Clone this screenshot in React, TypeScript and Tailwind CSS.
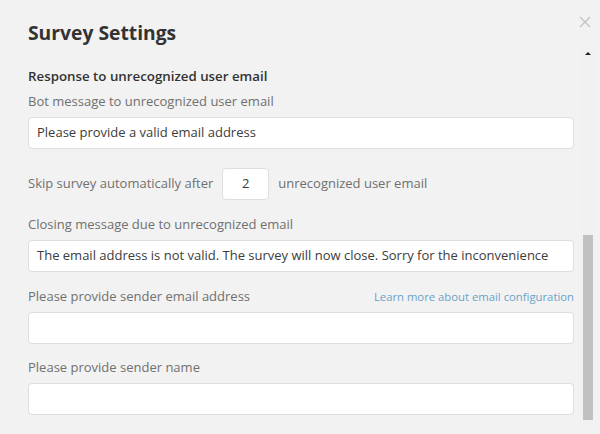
const font = { fontFamily: '"Open Sans", "Liberation Sans", sans-serif' };

function Field({
  label,
  value,
  link,
}: {
  label: string;
  value?: string;
  link?: string;
}) {
  return (
    <div>
      <div className="flex items-baseline justify-between h-5 mb-[6px]">
        <span className="text-[13px] leading-5 text-[#707070]">{label}</span>
        {link && <a className="text-[11.3px] leading-5 text-[#6aa3c8]">{link}</a>}
      </div>
      <div className="h-[32px] bg-white border border-[#dedede] rounded-[4px] px-[8px] flex items-center text-[13px] text-[#3c3c3c] whitespace-nowrap">
        {value}
      </div>
    </div>
  );
}

export default function App() {
  return (
    <div
      className="relative w-[600px] h-[434px] bg-[#f2f2f2] overflow-hidden flex"
      style={font}
    >
      <div className="w-[546px] ml-[28px] flex flex-col">
        <h1 className="mt-[19px] text-[19.3px] leading-7 font-bold text-[#333]">Survey Settings</h1>
        <h2 className="mt-[19px] text-[13.3px] leading-5 font-semibold text-[#333]">
          Response to unrecognized user email
        </h2>
        <div className="mt-[5px]">
          <Field label="Bot message to unrecognized user email" value="Please provide a valid email address" />
        </div>
        <div className="mt-[19px] flex items-center h-[32px] text-[13px] text-[#707070]">
          <span>Skip survey automatically after</span>
          <div className="mx-[9px] w-[47px] h-[32px] bg-white border border-[#dedede] rounded-[4px] flex items-center justify-center text-[#3c3c3c]">
            2
          </div>
          <span>unrecognized user email</span>
        </div>
        <div className="mt-[14px]">
          <Field
            label="Closing message due to unrecognized email"
            value="The email address is not valid. The survey will now close. Sorry for the inconvenience"
          />
        </div>
        <div className="mt-[14px]">
          <Field label="Please provide sender email address" link="Learn more about email configuration" />
        </div>
        <div className="mt-[13px]">
          <Field label="Please provide sender name" />
        </div>
      </div>

      <div className="ml-[6px] mt-[45px] w-[16px] h-[377px] bg-[#f1f1f1] flex flex-col">
        <div className="h-[16px] flex items-center justify-center">
          <div className="w-0 h-0 border-l-[3px] border-r-[3px] border-b-[3px] border-l-transparent border-r-transparent border-b-[#222]" />
        </div>
        <div className="flex-1" />
        <div className="ml-[3px] w-[10px] h-[185px] bg-[#c1c1c1] mb-[2px]" />
      </div>

      <button className="absolute top-[16px] left-[579px] w-[12px] h-[12px] text-[#c4c4c4]">
        <svg viewBox="0 0 12 12" width="12" height="12" stroke="currentColor" strokeWidth="1.4">
          <path d="M1 1L11 11M11 1L1 11" />
        </svg>
      </button>
    </div>
  );
}
